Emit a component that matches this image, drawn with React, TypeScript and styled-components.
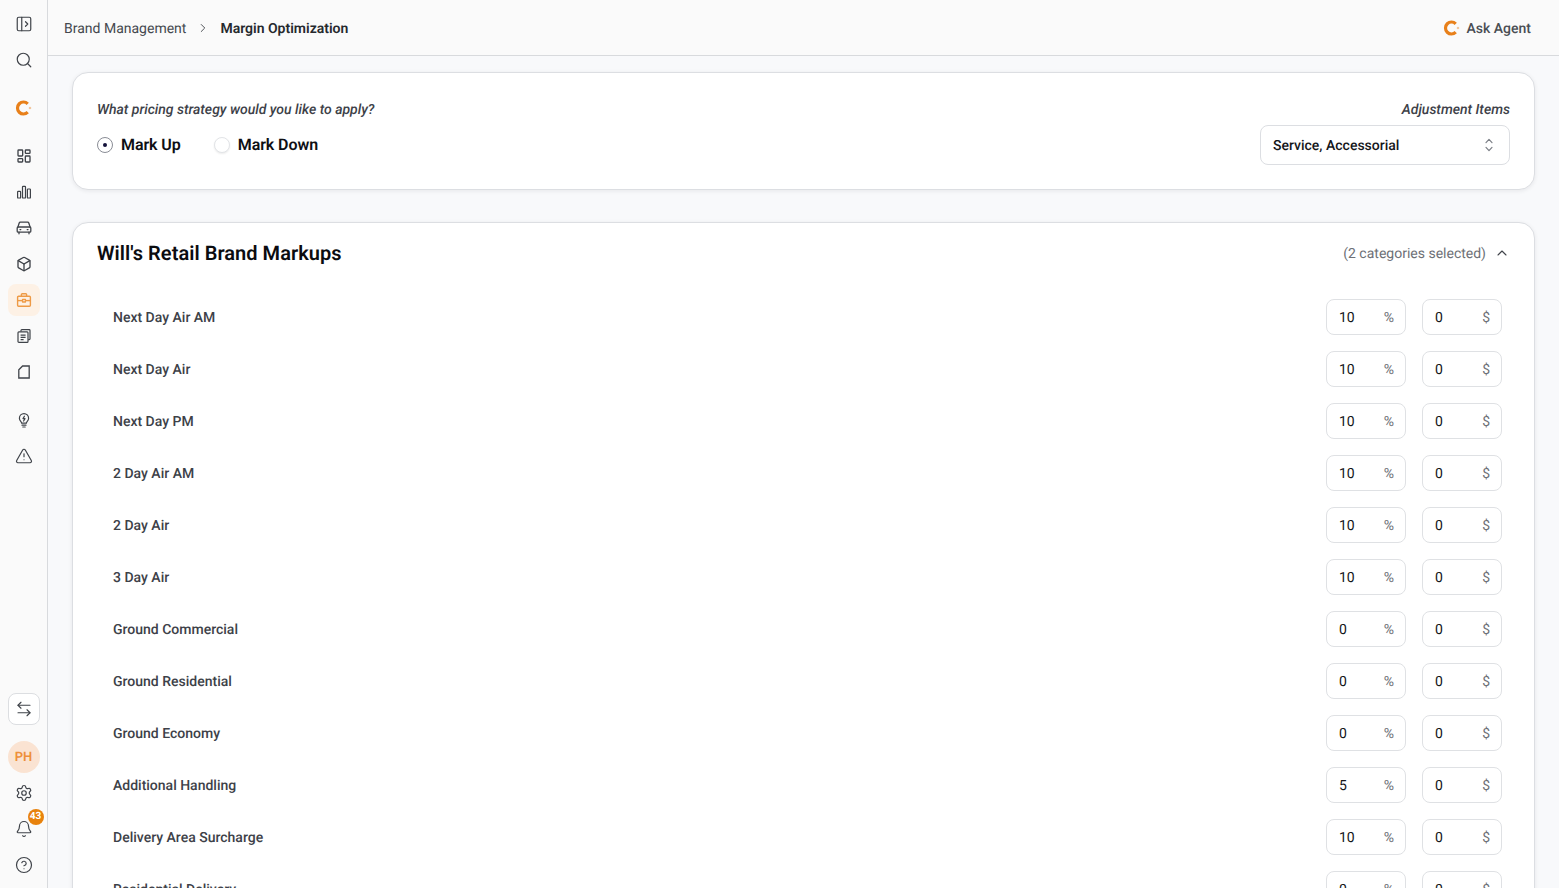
import React from 'react';
import styled, { createGlobalStyle } from 'styled-components';
import {
  PanelLeftOpen,
  Search,
  LayoutDashboard,
  Box,
  TriangleAlert,
  ArrowLeftRight,
  Settings,
  Bell,
  CircleHelp,
  ChevronRight,
  ChevronUp,
} from 'lucide-react';

const GlobalStyle = createGlobalStyle`
  html, body {
    margin: 0;
    padding: 0;
    height: 100%;
    overflow: hidden;
    background: #f8f9fb;
    font-family: Roboto, 'Liberation Sans', sans-serif;
    text-rendering: geometricPrecision;
  }
  * { box-sizing: border-box; }
`;

const Shell = styled.div`
  display: flex;
  width: 1559px;
  height: 888px;
  overflow: hidden;
`;

const Sidebar = styled.aside`
  flex: 0 0 48px;
  display: flex;
  flex-direction: column;
  align-items: center;
  padding: 8px 0 7px;
  background: #fafafa;
  border-right: 1px solid #d8dadd;
`;

const NavGroup = styled.div`
  display: flex;
  flex-direction: column;
  gap: 4px;
  margin-bottom: 16px;
  &:last-child { margin-bottom: 0; }
`;

const Spacer = styled.div`
  flex: 1;
`;

const NavItem = styled.div<{ $active?: boolean }>`
  position: relative;
  width: 32px;
  height: 32px;
  display: flex;
  align-items: center;
  justify-content: center;
  border-radius: 8px;
  color: ${(p) => (p.$active ? '#ee9a45' : '#3f4349')};
  background: ${(p) => (p.$active ? '#fdf1e5' : 'transparent')};
`;

const SwapButton = styled(NavItem)`
  background: #fff;
  border: 1px solid #dcdee1;
`;

const Avatar = styled.div`
  width: 32px;
  height: 32px;
  padding-top: 1px;
  border-radius: 50%;
  display: flex;
  align-items: center;
  justify-content: center;
  background: #fae3d2;
  color: #ee8f3a;
  font-size: 13px;
  font-weight: 600;
`;

const Badge = styled.span`
  position: absolute;
  top: -4px;
  right: -4px;
  width: 16px;
  height: 16px;
  border-radius: 50%;
  background: #e8820c;
  color: #fff;
  font-size: 10px;
  font-weight: 700;
  line-height: 16px;
  text-align: center;
`;

const Content = styled.div`
  flex: 1;
  min-width: 0;
  display: flex;
  flex-direction: column;
`;

const TopBar = styled.header`
  flex: 0 0 56px;
  display: flex;
  align-items: center;
  justify-content: space-between;
  padding: 0 28px 0 16px;
  background: #fafafa;
  border-bottom: 1px solid #d8dadd;
`;

const Crumbs = styled.nav`
  display: flex;
  align-items: center;
  gap: 10px;
  font-size: 14px;
  color: #44484e;
`;

const CrumbText = styled.span`
  padding-top: 2px;
`;

const CrumbCurrent = styled(CrumbText)`
  font-weight: 600;
  color: #26292e;
`;

const AskAgent = styled.div`
  display: flex;
  align-items: center;
  gap: 6px;
  font-size: 14px;
  font-weight: 500;
  color: #4a4e54;
`;

const Main = styled.main`
  flex: 1;
  min-height: 0;
  display: flex;
  flex-direction: column;
  gap: 32px;
  padding: 16px 24px 0;
  overflow: hidden;
`;

const Card = styled.section`
  flex: none;
  background: #fff;
  border: 1px solid #dcdee2;
  border-radius: 16px;
  box-shadow: 0 1px 4px rgba(20, 24, 40, 0.08);
`;

const StrategyCard = styled(Card)`
  height: 118px;
  padding: 24px;
  display: flex;
  justify-content: space-between;
`;

const StrategyLeft = styled.div`
  display: flex;
  flex-direction: column;
  gap: 11px;
`;

const StrategyRight = styled.div`
  display: flex;
  flex-direction: column;
  align-items: flex-end;
  gap: 3px;
`;

const Question = styled.div`
  font-size: 14px;
  line-height: 24px;
  padding-top: 1px;
  font-style: italic;
  font-weight: 500;
  color: #3d4148;
`;

const RadioRow = styled.div`
  display: flex;
  gap: 33px;
`;

const RadioOption = styled.label`
  display: flex;
  align-items: center;
  gap: 8px;
  font-size: 16px;
  font-weight: 600;
  letter-spacing: -0.08px;
  line-height: 24px;
  color: #0e0f14;
`;

const RadioCircle = styled.span<{ $checked?: boolean }>`
  width: 16px;
  height: 16px;
  margin-top: -1px;
  border-radius: 50%;
  background: #fff;
  border: 1px solid ${(p) => (p.$checked ? '#8a8d96' : '#e2e4e7')};
  box-shadow: ${(p) => (p.$checked ? 'none' : '0 1px 2px rgba(0,0,0,0.08)')};
  display: flex;
  align-items: center;
  justify-content: center;
  &::after {
    content: '';
    width: 4px;
    height: 4px;
    border-radius: 50%;
    background: ${(p) => (p.$checked ? '#14123a' : 'transparent')};
  }
`;

const Select = styled.div`
  width: 250px;
  height: 40px;
  display: flex;
  align-items: center;
  justify-content: space-between;
  padding: 0 12px;
  border: 1px solid #dcdee2;
  border-radius: 8px;
  background: #fff;
  font-size: 14px;
  font-weight: 500;
  color: #14161a;
`;

const SelectLabel = styled.span`
  padding-top: 2px;
`;

const MarkupsCard = styled(Card)`
  padding: 0 24px 24px;
`;

const MarkupsHeader = styled.div`
  height: 60px;
  display: flex;
  align-items: center;
  justify-content: space-between;
`;

const MarkupsTitle = styled.h2`
  margin: 0;
  font-size: 20px;
  font-weight: 600;
  letter-spacing: 0.04px;
  color: #0b0c10;
`;

const Selected = styled.div`
  display: flex;
  align-items: center;
  gap: 8px;
  font-size: 14px;
  color: #6d7076;
`;

const SelectedText = styled.span`
  padding-top: 2px;
`;

const Rows = styled.div`
  display: flex;
  flex-direction: column;
  gap: 16px;
  padding: 16px 8px 0 16px;
`;

const Row = styled.div`
  display: flex;
  align-items: center;
  justify-content: space-between;
  height: 36px;
`;

const RowLabel = styled.span`
  padding-top: 2px;
  font-size: 14px;
  font-weight: 500;
  color: #3d4148;
`;

const Inputs = styled.div`
  display: flex;
  gap: 16px;
`;

const Field = styled.div`
  width: 80px;
  height: 36px;
  display: flex;
  align-items: center;
  justify-content: space-between;
  padding: 2px 11px 0 12px;
  background: #fff;
  border: 1px solid #dfe1e4;
  border-radius: 8px;
  font-size: 14px;
  color: #14161a;
`;

const Unit = styled.span`
  color: #6d7076;
  font-size: 14px;
`;

const LogoMark = () => (
  <svg width="18" height="18" viewBox="0 0 18 18" fill="none">
    <path d="M12.74 4.76A6 6 0 1 0 12.74 13.24" stroke="#e8801a" strokeWidth="3.2" />
    <path d="M15 7.4l.45 1.15 1.15.45-1.15.45L15 10.6l-.45-1.15L13.4 9l1.15-.45z" fill="#eda765" />
  </svg>
);

const SelectIcon = () => (
  <svg width="16" height="16" viewBox="0 0 16 16" fill="none" stroke="#7b7f86" strokeWidth="1.2" strokeLinecap="round" strokeLinejoin="round">
    <path d="M5 5.6 8 2.4l3 3.2" />
    <path d="M5 10.4l3 3.2 3-3.2" />
  </svg>
);

const BarsIcon = () => (
  <svg width="16" height="16" viewBox="0 0 16 16" fill="none" stroke="currentColor" strokeWidth="1.2">
    <rect x="1.6" y="7.4" width="3" height="6.6" rx="0.6" />
    <rect x="6.5" y="2.4" width="3" height="11.6" rx="0.6" />
    <rect x="11.4" y="5" width="3" height="9" rx="0.6" />
  </svg>
);

const CarIcon = () => (
  <svg width="16" height="16" viewBox="0 0 16 16" fill="none" stroke="currentColor" strokeWidth="1.3" strokeLinecap="round" strokeLinejoin="round">
    <path d="M1.8 7.4 3.2 3a1.2 1.2 0 0 1 1.1-.8h7.4a1.2 1.2 0 0 1 1.1.8l1.4 4.4" />
    <rect x="1.2" y="7" width="13.6" height="5.2" rx="1" />
    <path d="M3 12.2v1.6M13 12.2v1.6M4 9.6h.8M11.2 9.6h.8" />
  </svg>
);

const CaseIcon = () => (
  <svg width="16" height="16" viewBox="0 0 16 16" fill="none" stroke="currentColor" strokeWidth="1.4" strokeLinejoin="round">
    <rect x="1.6" y="4.2" width="12.8" height="10" rx="1" />
    <path d="M5.4 4.2V2.6a.8.8 0 0 1 .8-.8h3.6a.8.8 0 0 1 .8.8v1.6" />
    <path d="M1.6 8.6h12.8" />
    <rect x="6.6" y="7.4" width="2.8" height="2.6" fill="#fdf1e5" />
  </svg>
);

const DocsIcon = () => (
  <svg width="16" height="16" viewBox="0 0 16 16" fill="none" stroke="currentColor" strokeWidth="1.2" strokeLinejoin="round">
    <path d="M5 3.6V2.4a.8.8 0 0 1 .8-.8h7.4a.8.8 0 0 1 .8.8v8.4a.8.8 0 0 1-.8.8h-1" />
    <rect x="2" y="3.8" width="10" height="10.6" rx="0.9" />
    <path d="M4.6 7.2h5M4.6 9.4h5M4.6 11.6h3" />
  </svg>
);

const PageIcon = () => (
  <svg width="16" height="16" viewBox="0 0 16 16" fill="none" stroke="currentColor" strokeWidth="1.3" strokeLinejoin="miter">
    <path d="M6.6 2h6.6v12H2.8V5.8z" />
  </svg>
);

const BulbIcon = () => (
  <svg width="16" height="16" viewBox="0 0 16 16" fill="none" stroke="currentColor" strokeWidth="1.2" strokeLinecap="round" strokeLinejoin="round">
    <path d="M5.6 11.2c0-1.4-2.2-2.4-2.2-5a4.6 4.6 0 0 1 9.2 0c0 2.6-2.2 3.6-2.2 5z" />
    <path d="M6 13.2h4M6.8 15h2.4" />
    <path d="M8.4 4.2 7 6.6h2L7.6 9" />
  </svg>
);

const rows: [string, string][] = [
  ['Next Day Air AM', '10'],
  ['Next Day Air', '10'],
  ['Next Day PM', '10'],
  ['2 Day Air AM', '10'],
  ['2 Day Air', '10'],
  ['3 Day Air', '10'],
  ['Ground Commercial', '0'],
  ['Ground Residential', '0'],
  ['Ground Economy', '0'],
  ['Additional Handling', '5'],
  ['Delivery Area Surcharge', '10'],
  ['Residential Delivery', '0'],
];

export default function App() {
  return (
    <>
      <GlobalStyle />
      <Shell>
        <Sidebar>
          <NavGroup>
            <NavItem><PanelLeftOpen size={18} strokeWidth={1.6} /></NavItem>
            <NavItem><Search size={18} strokeWidth={1.6} /></NavItem>
          </NavGroup>
          <NavGroup>
            <NavItem><LogoMark /></NavItem>
          </NavGroup>
          <NavGroup>
            <NavItem><LayoutDashboard size={16} /></NavItem>
            <NavItem><BarsIcon /></NavItem>
            <NavItem><CarIcon /></NavItem>
            <NavItem><Box size={16} /></NavItem>
            <NavItem $active><CaseIcon /></NavItem>
            <NavItem><DocsIcon /></NavItem>
            <NavItem><PageIcon /></NavItem>
          </NavGroup>
          <NavGroup>
            <NavItem><BulbIcon /></NavItem>
            <NavItem><TriangleAlert size={18} strokeWidth={1.6} /></NavItem>
          </NavGroup>
          <Spacer />
          <NavGroup>
            <SwapButton><ArrowLeftRight size={18} strokeWidth={1.5} /></SwapButton>
          </NavGroup>
          <NavGroup>
            <Avatar>PH</Avatar>
            <NavItem><Settings size={18} strokeWidth={1.6} /></NavItem>
            <NavItem>
              <Bell size={18} strokeWidth={1.6} />
              <Badge>43</Badge>
            </NavItem>
            <NavItem><CircleHelp size={18} strokeWidth={1.6} /></NavItem>
          </NavGroup>
        </Sidebar>
        <Content>
          <TopBar>
            <Crumbs>
              <CrumbText>Brand Management</CrumbText>
              <ChevronRight size={14} strokeWidth={1.6} />
              <CrumbCurrent>Margin Optimization</CrumbCurrent>
            </Crumbs>
            <AskAgent>
              <LogoMark />
              <CrumbText>Ask Agent</CrumbText>
            </AskAgent>
          </TopBar>
          <Main>
            <StrategyCard>
              <StrategyLeft>
                <Question>What pricing strategy would you like to apply?</Question>
                <RadioRow>
                  <RadioOption><RadioCircle $checked />Mark Up</RadioOption>
                  <RadioOption><RadioCircle />Mark Down</RadioOption>
                </RadioRow>
              </StrategyLeft>
              <StrategyRight>
                <Question>Adjustment Items</Question>
                <Select>
                  <SelectLabel>Service, Accessorial</SelectLabel>
                  <SelectIcon />
                </Select>
              </StrategyRight>
            </StrategyCard>
            <MarkupsCard>
              <MarkupsHeader>
                <MarkupsTitle>Will's Retail Brand Markups</MarkupsTitle>
                <Selected>
                  <SelectedText>(2 categories selected)</SelectedText>
                  <ChevronUp size={16} strokeWidth={1.6} color="#3f4349" />
                </Selected>
              </MarkupsHeader>
              <Rows>
                {rows.map(([label, pct]) => (
                  <Row key={label}>
                    <RowLabel>{label}</RowLabel>
                    <Inputs>
                      <Field>{pct}<Unit>%</Unit></Field>
                      <Field>0<Unit>$</Unit></Field>
                    </Inputs>
                  </Row>
                ))}
              </Rows>
            </MarkupsCard>
          </Main>
        </Content>
      </Shell>
    </>
  );
}
